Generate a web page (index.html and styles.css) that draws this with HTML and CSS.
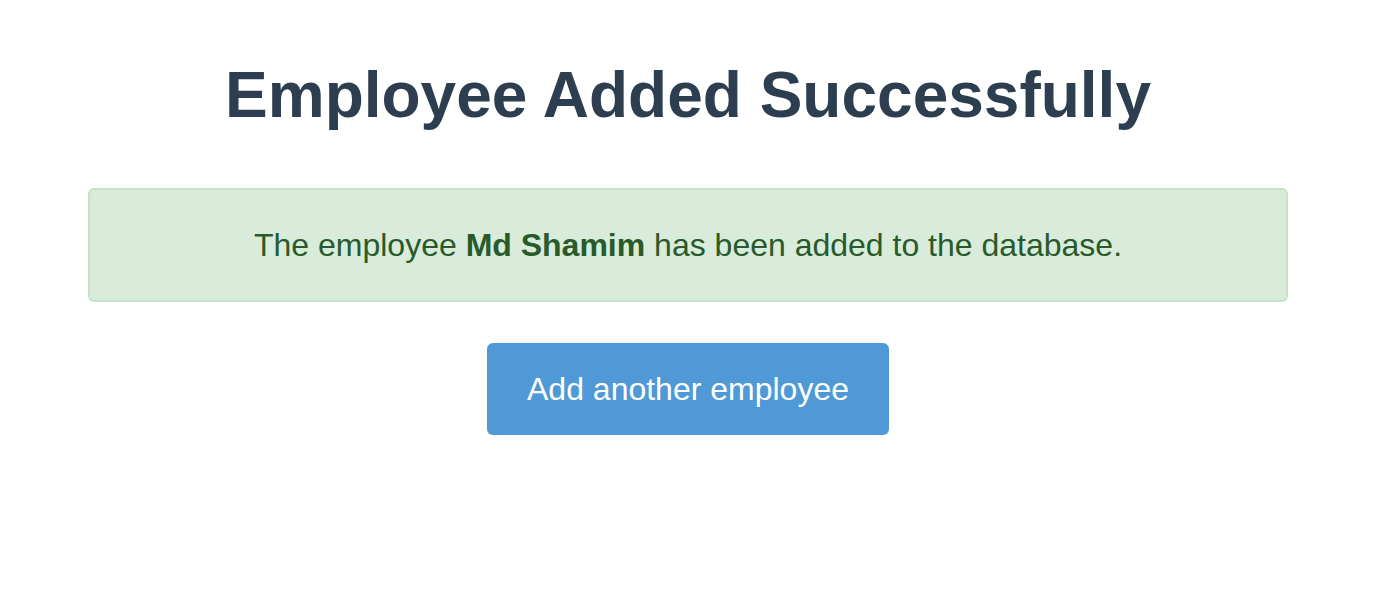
FILE: index.html
```html
<!DOCTYPE html>
<html lang="en">
<head>
<meta charset="utf-8">
<title>Employee Added Successfully</title>
<link rel="stylesheet" href="styles.css">
</head>
<body>
<div class="page">
  <main class="container">
    <h1 class="title">Employee Added Successfully</h1>
    <div class="alert"><p class="alert-text">The employee <strong>Md Shamim</strong> has been added to the database.</p></div>
    <div class="actions">
      <a class="btn" href="#">Add another employee</a>
    </div>
  </main>
</div>
</body>
</html>
```
FILE: styles.css
```css
html, body {
  margin: 0;
  padding: 0;
  background: #ffffff;
}
body {
  font-family: "Liberation Sans", Arial, sans-serif;
}
.page {
  width: 1376px;
}
.container {
  max-width: 1200px;
  margin: 0 auto;
  padding-top: 56px;
  text-align: center;
}
.title {
  margin: 0;
  font-size: 64px;
  font-weight: 700;
  line-height: 78px;
  color: #2c3e50;
}
.alert {
  margin-top: 54px;
  height: 114px;
  box-sizing: border-box;
  display: flex;
  align-items: center;
  justify-content: center;
  background: #d9ebdb;
  border: 2px solid #c4e3c9;
  border-radius: 6px;
  color: #285a2a;
}
.alert-text {
  margin: 0;
  font-size: 32px;
  line-height: 40px;
}
.actions {
  margin-top: 41px;
  display: flex;
  justify-content: center;
}
.btn {
  display: flex;
  align-items: center;
  justify-content: center;
  width: 402px;
  height: 92px;
  box-sizing: border-box;
  background: #4f99d6;
  color: #ffffff;
  border-radius: 6px;
  text-decoration: none;
  font-size: 32px;
}
```
